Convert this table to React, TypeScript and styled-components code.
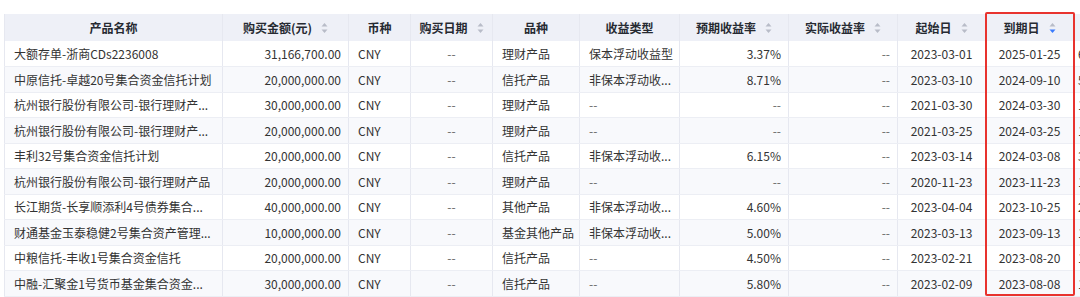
import React from 'react';
import styled, { createGlobalStyle } from 'styled-components';

const GlobalStyle = createGlobalStyle`
  html, body {
    margin: 0;
    padding: 0;
    background: #fff;
    overflow: hidden;
  }
  body {
    font-family: "Noto Sans CJK SC", "Noto Sans", sans-serif;
    color: #333;
  }
`;

type Align = 'left' | 'right' | 'center' | 'tight';

interface Column {
  title: string;
  width: number;
  align: Align;
  sort?: 'none' | 'desc';
}

const columns: Column[] = [
  { title: '产品名称', width: 218, align: 'left' },
  { title: '购买金额(元)', width: 126, align: 'right', sort: 'none' },
  { title: '币种', width: 62, align: 'left' },
  { title: '购买日期', width: 82, align: 'center', sort: 'none' },
  { title: '品种', width: 87, align: 'left' },
  { title: '收益类型', width: 100, align: 'left' },
  { title: '预期收益率', width: 109, align: 'right', sort: 'none' },
  { title: '实际收益率', width: 109, align: 'right', sort: 'none' },
  { title: '起始日', width: 88, align: 'center', sort: 'none' },
  { title: '到期日', width: 88, align: 'center', sort: 'desc' },
  { title: '剩余天数', width: 90, align: 'tight' },
];

const tableWidth = columns.reduce((s, c) => s + c.width, 0);

const rows: string[][] = [
  ['大额存单-浙商CDs2236008', '31,166,700.00', 'CNY', '--', '理财产品', '保本浮动收益型', '3.37%', '--', '2023-03-01', '2025-01-25', '696'],
  ['中原信托-卓越20号集合资金信托计划', '20,000,000.00', 'CNY', '--', '信托产品', '非保本浮动收...', '8.71%', '--', '2023-03-10', '2024-09-10', '559'],
  ['杭州银行股份有限公司-银行理财产...', '30,000,000.00', 'CNY', '--', '理财产品', '--', '--', '--', '2021-03-30', '2024-03-30', '1096'],
  ['杭州银行股份有限公司-银行理财产...', '20,000,000.00', 'CNY', '--', '理财产品', '--', '--', '--', '2021-03-25', '2024-03-25', '1096'],
  ['丰利32号集合资金信托计划', '20,000,000.00', 'CNY', '--', '信托产品', '非保本浮动收...', '6.15%', '--', '2023-03-14', '2024-03-08', '360'],
  ['杭州银行股份有限公司-银行理财产品', '20,000,000.00', 'CNY', '--', '理财产品', '--', '--', '--', '2020-11-23', '2023-11-23', '1095'],
  ['长江期货-长享顺添利4号债券集合...', '40,000,000.00', 'CNY', '--', '其他产品', '非保本浮动收...', '4.60%', '--', '2023-04-04', '2023-10-25', '204'],
  ['财通基金玉泰稳健2号集合资产管理...', '10,000,000.00', 'CNY', '--', '基金其他产品', '非保本浮动收...', '5.00%', '--', '2023-03-13', '2023-09-13', '184'],
  ['中粮信托-丰收1号集合资金信托', '20,000,000.00', 'CNY', '--', '信托产品', '--', '4.50%', '--', '2023-02-21', '2023-08-20', '180'],
  ['中融-汇聚金1号货币基金集合资金...', '30,000,000.00', 'CNY', '--', '信托产品', '--', '5.80%', '--', '2023-02-09', '2023-08-08', '180'],
];

const cellPadding: Record<Align, string> = {
  left: '0 3px 0 9px',
  right: '0 7px 0 3px',
  center: '0 3px',
  tight: '0 3px 0 4px',
};

const Page = styled.div`
  padding: 14px 0 0 4px;
  width: 1200px;
  position: relative;
`;

const Table = styled.table<{ $width: number }>`
  table-layout: fixed;
  border-collapse: collapse;
  width: ${(p) => p.$width}px;
  font-size: 12px;
  border-left: 1px solid #e6e8f0;
`;

const HeadCell = styled.th`
  height: 27px;
  padding: 0 6px;
  background: #eef0f7;
  border-right: 1px solid #e6e8f0;
  font-weight: 700;
  font-size: 12px;
  color: #262a32;
  text-align: center;
  white-space: nowrap;
  overflow: hidden;
  box-sizing: border-box;
`;

const HeadInner = styled.span`
  display: inline-flex;
  align-items: center;
  gap: 9px;
`;

const Row = styled.tr<{ $striped: boolean }>`
  background: ${(p) => (p.$striped ? '#f8f9fc' : '#fff')};
`;

const Cell = styled.td<{ $align: Align; $muted: boolean }>`
  height: 25.5px;
  padding: ${(p) => cellPadding[p.$align]};
  border-right: 1px solid #e6e8f0;
  border-bottom: 1px solid #eceef4;
  text-align: ${(p) => (p.$align === 'tight' ? 'left' : p.$align)};
  color: ${(p) => (p.$muted ? '#666' : '#333')};
  white-space: nowrap;
  overflow: hidden;
  text-overflow: ellipsis;
  box-sizing: border-box;
`;

const Highlight = styled.div`
  position: absolute;
  left: 985px;
  top: 12px;
  width: 90px;
  height: 284px;
  border: 2px solid #e8332e;
  border-radius: 2px;
  box-sizing: border-box;
  pointer-events: none;
`;

const SortIcon = ({ active }: { active?: 'desc' }) => (
  <svg width="7" height="12" viewBox="0 0 7 12">
    <path d="M3.5 1 L6.5 4.6 L0.5 4.6 Z" fill="#b8bcc8" />
    <path d="M3.5 11 L6.5 7.4 L0.5 7.4 Z" fill={active === 'desc' ? '#3a7bfd' : '#b8bcc8'} />
  </svg>
);

const App = () => {
  return (
    <Page>
      <GlobalStyle />
      <Table $width={tableWidth}>
        <colgroup>
          {columns.map((c) => (
            <col key={c.title} style={{ width: c.width }} />
          ))}
        </colgroup>
        <thead>
          <tr>
            {columns.map((c) => (
              <HeadCell key={c.title}>
                <HeadInner>
                  {c.title}
                  {c.sort && <SortIcon active={c.sort === 'desc' ? 'desc' : undefined} />}
                </HeadInner>
              </HeadCell>
            ))}
          </tr>
        </thead>
        <tbody>
          {rows.map((r, i) => (
            <Row key={i} $striped={i % 2 === 1}>
              {r.map((v, j) => (
                <Cell key={j} $align={columns[j].align} $muted={v === '--'}>
                  {v}
                </Cell>
              ))}
            </Row>
          ))}
        </tbody>
      </Table>
      <Highlight />
    </Page>
  );
};

export default App;
